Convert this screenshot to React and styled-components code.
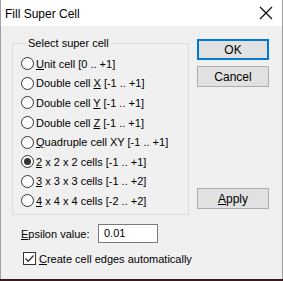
import styled, { createGlobalStyle } from 'styled-components'

const Global = createGlobalStyle`
  html, body {
    margin: 0;
    padding: 0;
    background: #3b1a1c;
  }
  body {
    font-family: "Liberation Sans", Arial, sans-serif;
    font-size: 11px;
    color: #000;
  }
`

const Window = styled.div`
  width: 283px;
  height: 279px;
  box-sizing: border-box;
  border-left: 1px solid #a0a0a0;
  border-right: 1px solid #a0a0a0;
  background: #f0f0f0;
  display: flex;
  flex-direction: column;
`

const TitleBar = styled.div`
  height: 26px;
  flex: none;
  background: #fff;
  display: flex;
  align-items: center;
  justify-content: space-between;
  padding: 0 9px 0 4px;
`

const Title = styled.span`
  font-size: 12px;
  line-height: 16px;
  margin-top: 1px;
`

const Body = styled.div`
  flex: 1;
  padding: 9px 12px 0 11px;
  display: flex;
  flex-direction: column;
`

const Top = styled.div`
  display: flex;
  flex: none;
  gap: 8px;
`

const Group = styled.fieldset`
  margin: 0;
  width: 177px;
  height: 180px;
  box-sizing: border-box;
  border: 1px solid #dcdcdc;
  padding: 3px 0 0 8px;
  display: flex;
  flex-direction: column;
`

const Legend = styled.legend`
  padding: 0 2px;
  margin-left: 5px;
  line-height: 16px;
`

const Row = styled.label`
  height: 19.6px;
  display: flex;
  align-items: center;
  gap: 2px;
  white-space: nowrap;
`

const Radio = styled.span`
  width: 13px;
  height: 13px;
  box-sizing: border-box;
  border-radius: 50%;
  border: 1px solid #333;
  background: #fff;
  display: flex;
  align-items: center;
  justify-content: center;
  flex: none;
  &::after {
    content: '';
    width: 7px;
    height: 7px;
    border-radius: 50%;
    background: ${p => (p.$checked ? '#333' : 'transparent')};
  }
`

const Buttons = styled.div`
  display: flex;
  flex-direction: column;
  padding-top: 4px;
`

const Button = styled.button`
  width: 72px;
  height: 21px;
  box-sizing: border-box;
  margin: 0 0 6px;
  padding: 0;
  font: inherit;
  font-size: 12px;
  color: #000;
  background: #e1e1e1;
  border: ${p => (p.$default ? '2px solid #0078d7' : '1px solid #adadad')};
  &:last-child {
    margin-top: auto;
  }
`

const Field = styled.div`
  display: flex;
  align-items: center;
  margin-top: 9px;
  padding-left: 9px;
  white-space: nowrap;
`

const FieldLabel = styled.span`
  width: 77px;
`

const Input = styled.div`
  width: 60px;
  height: 19px;
  box-sizing: border-box;
  border: 1px solid #7a7a7a;
  background: #fff;
  padding: 0 0 0 5px;
  line-height: 17px;
`

const Check = styled.label`
  display: flex;
  align-items: center;
  gap: 3px;
  margin-top: 9px;
  padding-left: 11px;
  white-space: nowrap;
`

const Box = styled.span`
  width: 13px;
  height: 13px;
  box-sizing: border-box;
  border: 1px solid #333;
  background: #fff;
  display: flex;
  align-items: center;
  justify-content: center;
`

const options = [
  { key: 'U', rest: 'nit cell [0 .. +1]', pre: '' },
  { pre: 'Double cell ', key: 'X', rest: ' [-1 .. +1]' },
  { pre: 'Double cell ', key: 'Y', rest: ' [-1 .. +1]' },
  { pre: 'Double cell ', key: 'Z', rest: ' [-1 .. +1]' },
  { pre: '', key: 'Q', rest: 'uadruple cell XY [-1 .. +1]' },
  { pre: '', key: '2', rest: ' x 2 x 2 cells [-1 .. +1]', checked: true },
  { pre: '', key: '3', rest: ' x 3 x 3 cells [-1 .. +2]' },
  { pre: '', key: '4', rest: ' x 4 x 4 cells [-2 .. +2]' },
]

const App = () => (
  <Window>
    <Global />
    <TitleBar>
      <Title>Fill Super Cell</Title>
      <svg width="14" height="14" viewBox="0 0 14 14">
        <path d="M1 1 L13 13 M13 1 L1 13" stroke="#000" strokeWidth="1.1" />
      </svg>
    </TitleBar>
    <Body>
      <Top>
        <Group>
          <Legend>Select super cell</Legend>
          {options.map((o, i) => (
            <Row key={i}>
              <Radio $checked={o.checked} />
              <span>
                {o.pre}
                <u>{o.key}</u>
                {o.rest}
              </span>
            </Row>
          ))}
        </Group>
        <Buttons>
          <Button $default>OK</Button>
          <Button>Cancel</Button>
          <Button>
            <u>A</u>pply
          </Button>
        </Buttons>
      </Top>
      <Field>
        <FieldLabel>
          <u>E</u>psilon value:
        </FieldLabel>
        <Input>0.01</Input>
      </Field>
      <Check>
        <Box>
          <svg width="11" height="11" viewBox="0 0 11 11">
            <path d="M1.5 5.5 L4.2 8.2 L9.5 2.5" fill="none" stroke="#333" strokeWidth="1.3" />
          </svg>
        </Box>
        <span>
          <u>C</u>reate cell edges automatically
        </span>
      </Check>
    </Body>
  </Window>
)

export default App
